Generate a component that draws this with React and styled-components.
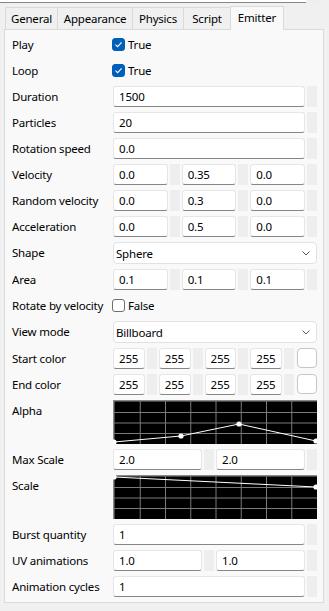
import styled, { createGlobalStyle } from "styled-components";

const Global = createGlobalStyle`
  html, body { margin: 0; padding: 0; background: #f0f0f0; }
`;

const Page = styled.div`
  width: 329px;
  height: 611px;
  overflow: hidden;
  background: #f0f0f0;
  font-family: "Segoe UI", "Noto Sans", sans-serif;
  font-size: 11.5px;
  letter-spacing: -0.2px;
  color: #000;
`;

const Stub = styled.div`
  display: flex;
  gap: 2px;
  width: 318px;
  margin-top: -18px;
`;

const StubBox = styled.div`
  flex: 1;
  height: 20px;
  background: #fff;
  border-bottom: 1px solid #868686;
`;

const TabBar = styled.div`
  display: flex;
  align-items: flex-end;
  height: 23px;
  margin-top: 3px;
  padding-left: 5px;
`;

const Tab = styled.div`
  box-sizing: border-box;
  width: ${(p) => p.$w}px;
  height: ${(p) => (p.$active ? 24 : 22)}px;
  margin-left: -1px;
  margin-bottom: ${(p) => (p.$active ? -1 : 0)}px;
  border: 1px solid #dadada;
  border-bottom: none;
  background: ${(p) => (p.$active ? "#f9f9f9" : "#f0f0f0")};
  display: flex;
  align-items: center;
  justify-content: center;
  padding-bottom: ${(p) => (p.$active ? 3 : 0)}px;
  position: relative;
  z-index: ${(p) => (p.$active ? 1 : 0)};
  &:first-child { margin-left: 0; }
`;

const Panel = styled.div`
  box-sizing: border-box;
  width: 320px;
  height: 574px;
  margin-left: 4px;
  border: 1px solid #dadada;
  background: #f9f9f9;
  padding: 4px 6px 0 7px;
  display: grid;
  grid-template-columns: 101px 204px;
  grid-auto-rows: min-content;
  row-gap: 5px;
  align-content: start;
`;

const Label = styled.div`
  line-height: 21px;
  white-space: nowrap;
`;

const Check = styled.div`
  display: flex;
  align-items: center;
  gap: 3px;
  height: 21px;
  margin-left: -1px;
`;

const Box = styled.div`
  box-sizing: border-box;
  width: 13px;
  height: 13px;
  border-radius: 3px;
  background: ${(p) => (p.$on ? "#005fb8" : "#fff")};
  border: 1px solid ${(p) => (p.$on ? "#005fb8" : "#6e6e6e")};
  display: flex;
  align-items: center;
  justify-content: center;
`;

const Group = styled.div`
  display: flex;
  gap: 2px;
  height: 21px;
`;

const FieldWrap = styled.div`
  flex: 1;
  display: flex;
  gap: 2px;
  min-width: 0;
`;

const Input = styled.div`
  box-sizing: border-box;
  flex: 1;
  min-width: 0;
  height: 21px;
  background: #fff;
  border: 1px solid #e6e6e6;
  border-bottom: 1px solid #868686;
  border-radius: 3px;
  padding-left: 5px;
  line-height: 19px;
`;

const Spin = styled.div`
  width: 10px;
  background: #eeeeee;
`;

const Swatch = styled.div`
  box-sizing: border-box;
  width: 20px;
  height: 20px;
  margin-left: 1px;
  background: #fff;
  border: 1px solid #c6c6c6;
  border-radius: 4px;
`;

const Select = styled.div`
  box-sizing: border-box;
  height: 22px;
  background: #fff;
  border: 1px solid #e2e2e2;
  border-radius: 4px;
  display: flex;
  align-items: center;
  justify-content: space-between;
  padding: 0 6px 0 2px;
`;

const Graph = styled.svg`
  display: block;
  width: 204px;
  height: 44px;
  background: #000;
`;

const Field = ({ v }) => (
  <FieldWrap>
    <Input>{v}</Input>
    <Spin />
  </FieldWrap>
);

const Fields = ({ values, swatch }) => (
  <Group>
    {values.map((v, i) => (
      <Field key={i} v={v} />
    ))}
    {swatch && <Swatch />}
  </Group>
);

const CheckValue = ({ on }) => (
  <Check>
    <Box $on={on}>
      {on && (
        <svg width="9" height="9" viewBox="0 0 9 9">
          <path d="M1.5 4.6 L3.6 6.6 L7.6 2.4" fill="none" stroke="#fff" strokeWidth="1.1" />
        </svg>
      )}
    </Box>
    {on ? "True" : "False"}
  </Check>
);

const Dropdown = ({ value }) => (
  <Select>
    {value}
    <svg width="8" height="5" viewBox="0 0 8 5">
      <path d="M0.5 0.5 L4 4 L7.5 0.5" fill="none" stroke="#5d5d5d" strokeWidth="1" />
    </svg>
  </Select>
);

const Curve = ({ points }) => {
  const vx = [1, 2, 3, 4, 5, 6, 7].map((i) => 2 + 25.25 * i);
  const hy = [1, 2, 3].map((i) => 2 + 10.5 * i);
  return (
    <Graph viewBox="0 0 204 44">
      <rect x="0" y="0" width="204" height="1.5" fill="#8a8a8a" />
      <rect x="0" y="0" width="1.5" height="44" fill="#8a8a8a" />
      {vx.map((x) => (
        <line key={x} x1={x} y1="0" x2={x} y2="44" stroke="#7a7a7a" strokeWidth="1" />
      ))}
      {hy.map((y) => (
        <line key={y} x1="0" y1={y} x2="204" y2={y} stroke="#7a7a7a" strokeWidth="1" />
      ))}
      <polyline
        points={points.map((p) => p.join(",")).join(" ")}
        fill="none"
        stroke="#fff"
        strokeWidth="1"
      />
      {points.map(([x, y], i) => (
        <circle key={i} cx={x} cy={y} r="2.6" fill="#fff" />
      ))}
    </Graph>
  );
};

export default function App() {
  return (
    <Page>
      <Global />
      <Stub>
        <StubBox />
        <Spin />
      </Stub>
      <TabBar>
        <Tab $w={53}>General</Tab>
        <Tab $w={76}>Appearance</Tab>
        <Tab $w={52}>Physics</Tab>
        <Tab $w={48}>Script</Tab>
        <Tab $w={54} $active>Emitter</Tab>
      </TabBar>
      <Panel>
        <Label>Play</Label>
        <CheckValue on />
        <Label>Loop</Label>
        <CheckValue on />
        <Label>Duration</Label>
        <Fields values={["1500"]} />
        <Label>Particles</Label>
        <Fields values={["20"]} />
        <Label>Rotation speed</Label>
        <Fields values={["0.0"]} />
        <Label>Velocity</Label>
        <Fields values={["0.0", "0.35", "0.0"]} />
        <Label>Random velocity</Label>
        <Fields values={["0.0", "0.3", "0.0"]} />
        <Label>Acceleration</Label>
        <Fields values={["0.0", "0.5", "0.0"]} />
        <Label>Shape</Label>
        <Dropdown value="Sphere" />
        <Label>Area</Label>
        <Fields values={["0.1", "0.1", "0.1"]} />
        <Label>Rotate by velocity</Label>
        <CheckValue on={false} />
        <Label>View mode</Label>
        <Dropdown value="Billboard" />
        <Label>Start color</Label>
        <Fields values={["255", "255", "255", "255"]} swatch />
        <Label>End color</Label>
        <Fields values={["255", "255", "255", "255"]} swatch />
        <Label>Alpha</Label>
        <Curve points={[[1, 42], [68, 36], [126, 24], [203, 41]]} />
        <Label>Max Scale</Label>
        <Fields values={["2.0", "2.0"]} />
        <Label>Scale</Label>
        <Curve points={[[1, 2], [203, 12]]} />
        <Label>Burst quantity</Label>
        <Fields values={["1"]} />
        <Label>UV animations</Label>
        <Fields values={["1.0", "1.0"]} />
        <Label>Animation cycles</Label>
        <Fields values={["1"]} />
      </Panel>
    </Page>
  );
}
